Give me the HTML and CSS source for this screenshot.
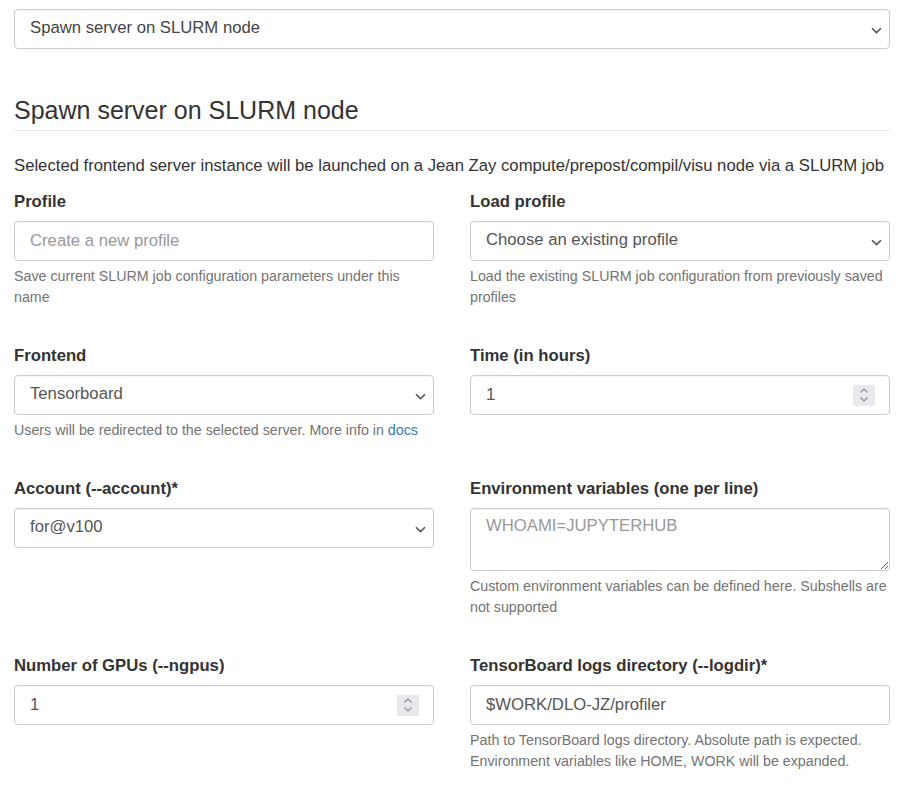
FILE: index.html
```html
<!DOCTYPE html>
<html lang="en">
<head>
<meta charset="utf-8">
<title>Spawn server on SLURM node</title>
<link rel="stylesheet" href="styles.css">
</head>
<body>
<div class="page">
  <div class="control select top-select">
    <span class="value">Spawn server on SLURM node</span>
    <svg class="chev" width="11" height="7" viewBox="0 0 11 7"><path d="M1 1.2 L5.5 5.6 L10 1.2" fill="none" stroke="#555" stroke-width="1.6"/></svg>
  </div>

  <h3 class="title">Spawn server on SLURM node</h3>
  <p class="intro">Selected frontend server instance will be launched on a Jean Zay compute/prepost/compil/visu node via a SLURM job</p>

  <div class="grid">
    <div class="group">
      <label class="label">Profile</label>
      <div class="control"><span class="placeholder">Create a new profile</span></div>
      <p class="help">Save current SLURM job configuration parameters under this name</p>
    </div>
    <div class="group">
      <label class="label">Load profile</label>
      <div class="control select">
        <span class="value">Choose an existing profile</span>
        <svg class="chev" width="11" height="7" viewBox="0 0 11 7"><path d="M1 1.2 L5.5 5.6 L10 1.2" fill="none" stroke="#555" stroke-width="1.6"/></svg>
      </div>
      <p class="help">Load the existing SLURM job configuration from previously saved profiles</p>
    </div>

    <div class="group">
      <label class="label">Frontend</label>
      <div class="control select">
        <span class="value">Tensorboard</span>
        <svg class="chev" width="11" height="7" viewBox="0 0 11 7"><path d="M1 1.2 L5.5 5.6 L10 1.2" fill="none" stroke="#555" stroke-width="1.6"/></svg>
      </div>
      <p class="help">Users will be redirected to the selected server. More info in <a href="#" class="link">docs</a></p>
    </div>
    <div class="group">
      <label class="label">Time (in hours)</label>
      <div class="control number">
        <span class="value">1</span>
        <span class="spin"><svg width="10" height="16" viewBox="0 0 10 16"><path d="M1.5 5.5 L5 2 L8.5 5.5 M1.5 10.5 L5 14 L8.5 10.5" fill="none" stroke="#8a8a8f" stroke-width="1.1"/></svg></span>
      </div>
    </div>

    <div class="group">
      <label class="label">Account (--account)*</label>
      <div class="control select">
        <span class="value">for@v100</span>
        <svg class="chev" width="11" height="7" viewBox="0 0 11 7"><path d="M1 1.2 L5.5 5.6 L10 1.2" fill="none" stroke="#555" stroke-width="1.6"/></svg>
      </div>
    </div>
    <div class="group">
      <label class="label">Environment variables (one per line)</label>
      <textarea class="area" placeholder="WHOAMI=JUPYTERHUB"></textarea>
      <p class="help">Custom environment variables can be defined here. Subshells are not supported</p>
    </div>

    <div class="group">
      <label class="label">Number of GPUs (--ngpus)</label>
      <div class="control number">
        <span class="value">1</span>
        <span class="spin"><svg width="10" height="16" viewBox="0 0 10 16"><path d="M1.5 5.5 L5 2 L8.5 5.5 M1.5 10.5 L5 14 L8.5 10.5" fill="none" stroke="#8a8a8f" stroke-width="1.1"/></svg></span>
      </div>
    </div>
    <div class="group">
      <label class="label">TensorBoard logs directory (--logdir)*</label>
      <div class="control"><span class="value">$WORK/DLO-JZ/profiler</span></div>
      <p class="help">Path to TensorBoard logs directory. Absolute path is expected. Environment variables like HOME, WORK will be expanded.</p>
    </div>
  </div>
</div>
</body>
</html>
```

FILE: styles.css
```css
* { box-sizing: border-box; }

html, body {
  margin: 0;
  padding: 0;
  background: #fff;
}

body {
  font-family: "Liberation Sans", Arial, sans-serif;
  font-size: 16.7px;
  color: #333;
}

.page {
  padding: 9px 20px 0 14px;
}

.control {
  display: flex;
  align-items: center;
  height: 40px;
  padding: 0 15px;
  border: 1px solid #ccc;
  border-radius: 4px;
  background: #fff;
  font-size: 16.7px;
  color: #555;
  box-shadow: inset 0 1px 1px rgba(0, 0, 0, 0.04);
}

.control .value,
.control .placeholder {
  flex: 1;
  line-height: 20px;
  padding-bottom: 1px;
}

.select .value { padding-bottom: 3px; }

.top-select .value { color: #444; }

.placeholder { color: #999; }

.select { padding-right: 7px; }

.chev {
  flex: none;
  margin-top: 2px;
}

.number { padding-right: 14px; }

.spin {
  flex: none;
  width: 22px;
  height: 21px;
  background: #e9e9ed;
  display: flex;
  align-items: center;
  justify-content: center;
}

.title {
  margin: 48px 0 0;
  padding-bottom: 7px;
  border-bottom: 1px solid #e5e5e5;
  font-size: 25px;
  font-weight: 400;
  line-height: 26px;
  color: #333;
}

.intro {
  margin: 24px 0 12px;
  line-height: 22px;
}

.grid {
  display: grid;
  grid-template-columns: 420px 420px;
  column-gap: 36px;
  row-gap: 35px;
  align-items: start;
}

.label {
  display: block;
  font-weight: 700;
  line-height: 26px;
  margin-bottom: 6px;
}

.help {
  margin: 5px 0 0;
  font-size: 14.25px;
  line-height: 21px;
  color: #737373;
}

.link {
  color: #337ab7;
  text-decoration: none;
}

.area {
  display: block;
  width: 100%;
  height: 63px;
  margin: 0;
  padding: 6px 15px;
  border: 1px solid #ccc;
  border-radius: 4px;
  font-family: "Liberation Sans", Arial, sans-serif;
  font-size: 16.7px;
  line-height: 22px;
  color: #555;
  resize: vertical;
  box-shadow: inset 0 1px 1px rgba(0, 0, 0, 0.04);
}

.area::placeholder { color: #999; }
```
